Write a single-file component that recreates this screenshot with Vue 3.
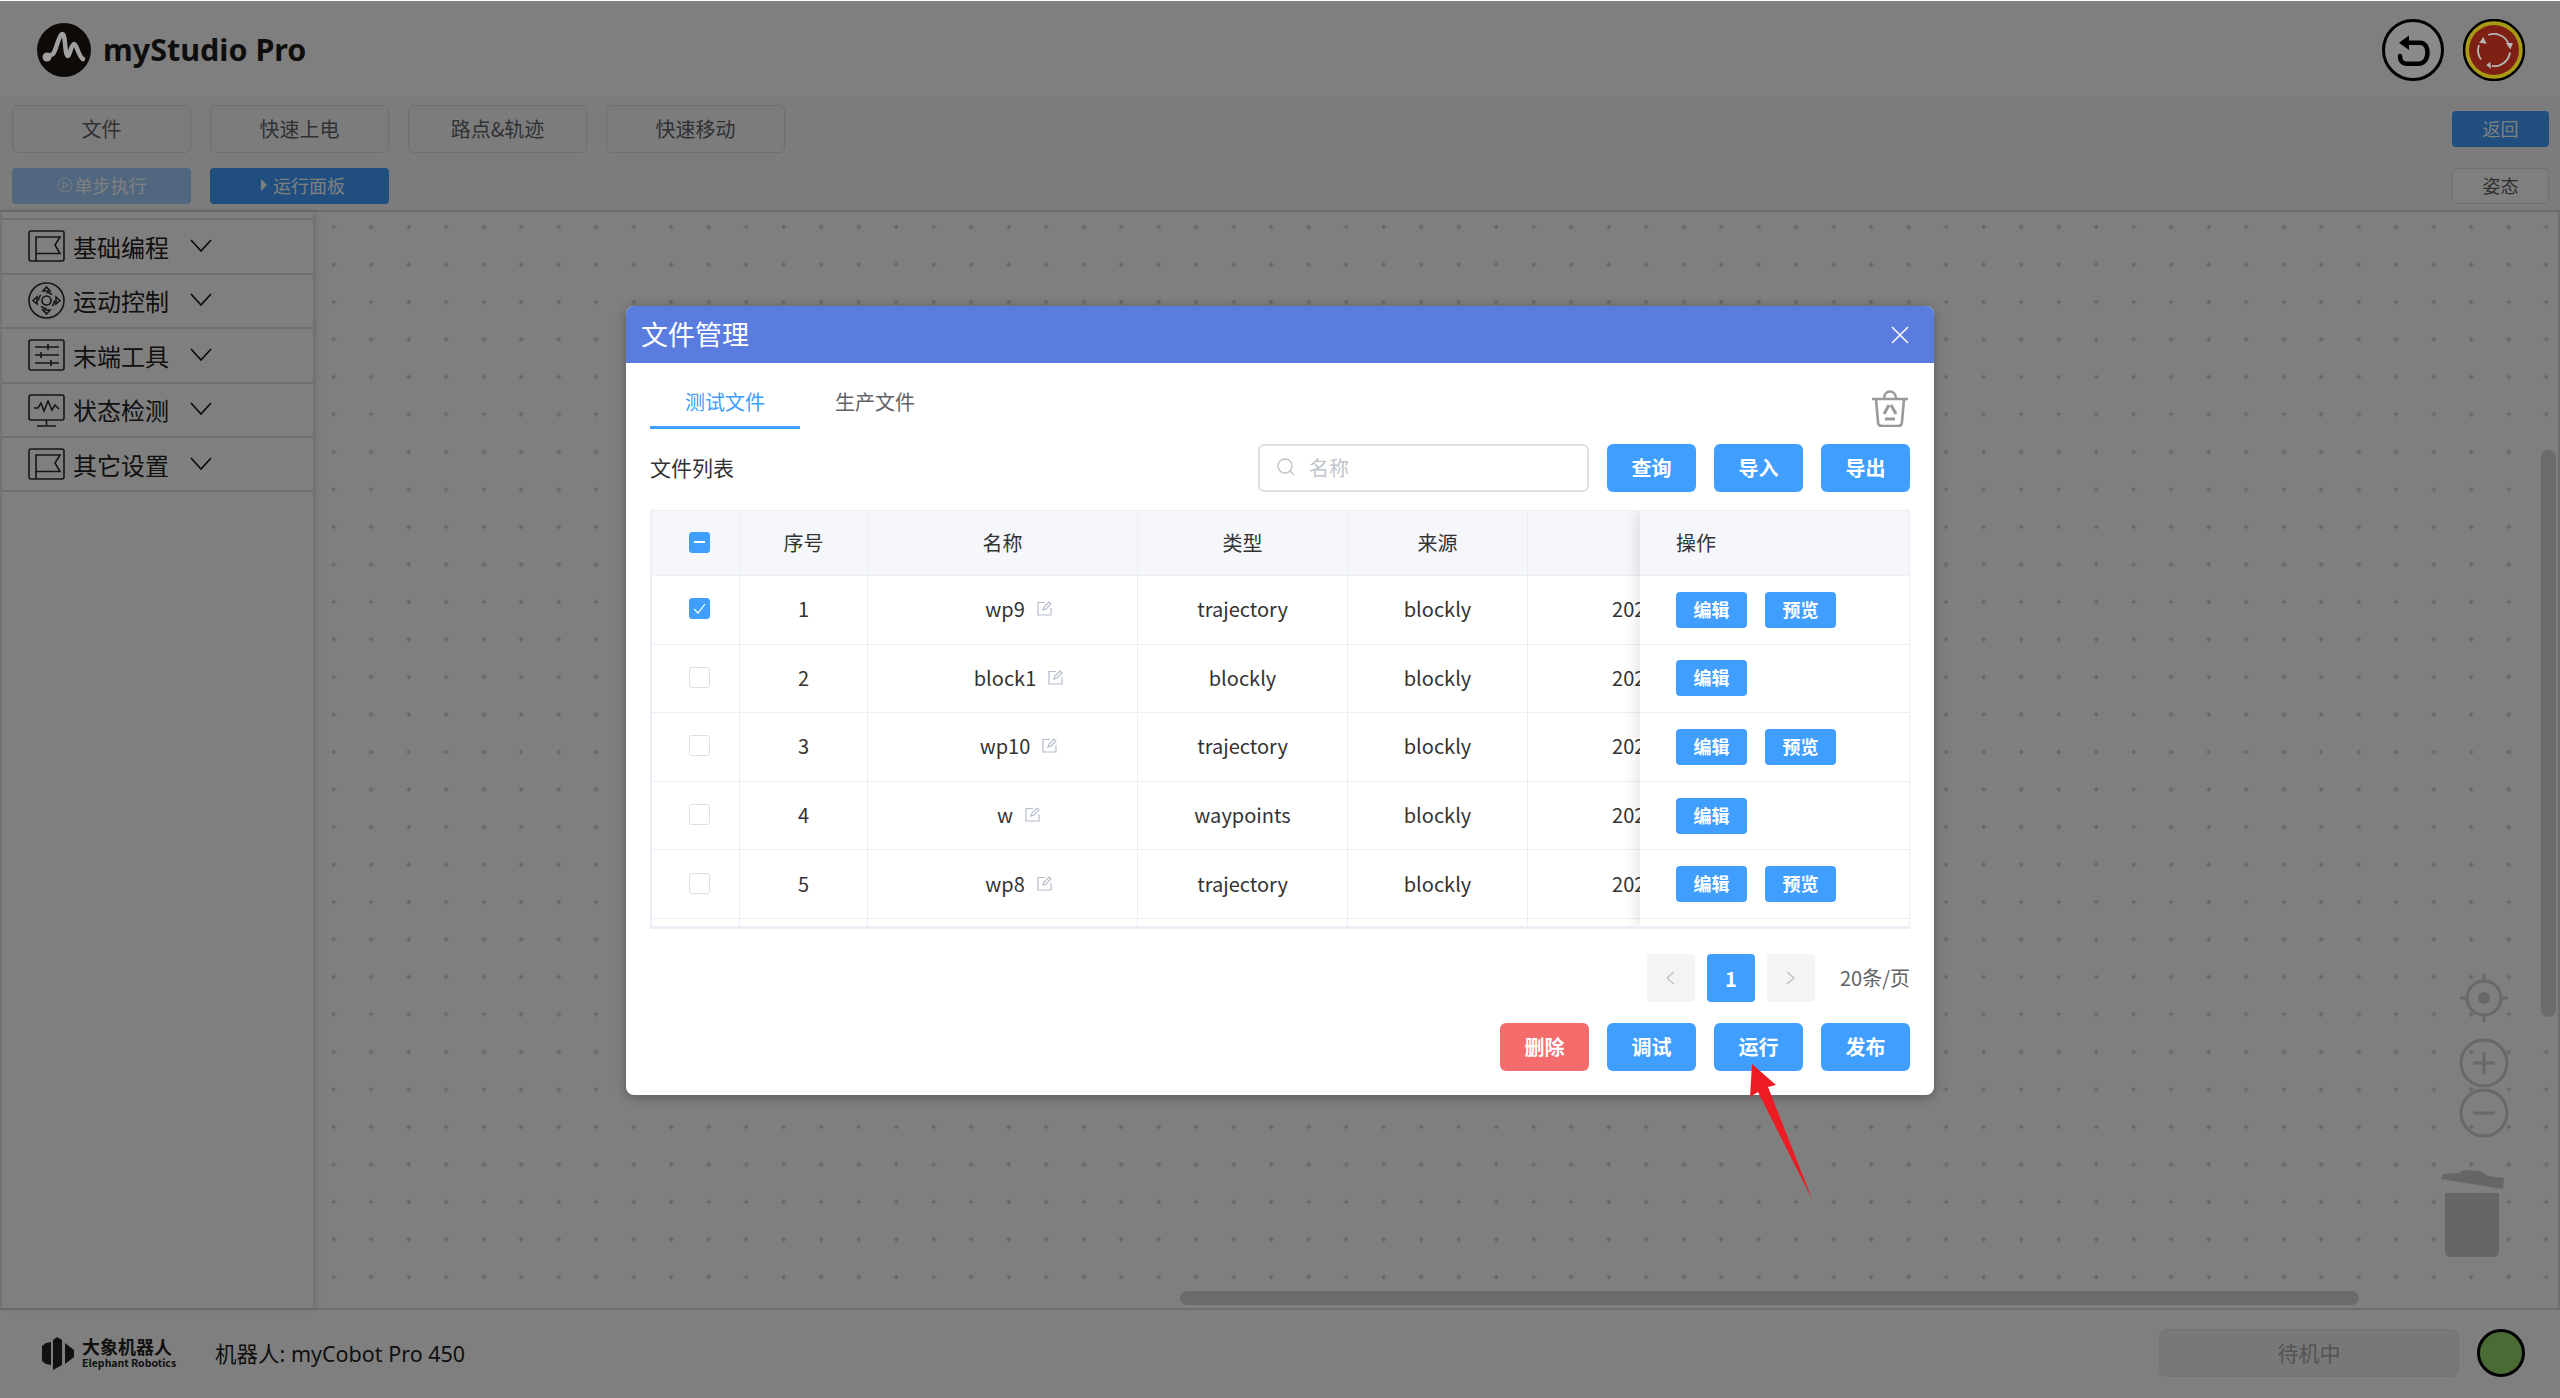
<template>
  <div class="page">
    <header class="topbar">
      <div class="brand">
        <svg class="brand-logo" width="54" height="54" viewBox="0 0 54 54">
          <circle cx="27" cy="27" r="27" fill="#0e0a08" />
          <path d="M10 34 L16 31 C19 27 21 16 24 12 C26.500 9 27.500 14 28 20 C28.500 26 29 33 31 33 C33 33 34 21 37 21 C40 21 41 33 46 36" fill="none" stroke="#a0a0a0" stroke-width="4.500" stroke-linecap="round" stroke-linejoin="round" />
          <circle cx="10" cy="34" r="4.500" fill="#a0a0a0" />
        </svg>
        <span class="brand-name">myStudio Pro</span>
      </div>
      <div class="top-actions">
        <button class="round-btn undo">
          <svg width="62" height="62" viewBox="0 0 62 62">
            <path d="M27 23.7 H38 C43 23.7 45.5 28 45.5 33.5 C45.5 40 42 44.7 36 44.7 H24 C20.5 44.7 18 41.5 18 37" fill="none" stroke="#000" stroke-width="4.5" stroke-linecap="round" />
            <path d="M17 23.7 L27 16.5 V31 Z" fill="#000" />
          </svg>
        </button>
        <button class="round-btn stop">
          <svg width="62" height="62" viewBox="0 0 62 62">
            <circle cx="31" cy="31" r="30" fill="#a89a14" stroke="#000" stroke-width="2.500" />
            <circle cx="31" cy="31" r="25" fill="#7e2114" />
            <path d="M25.300 16 A16 16 0 0 1 45.500 24.500 M47 33.500 A16 16 0 0 1 29 47 M18 40.500 A16 16 0 0 1 16 26" fill="none" stroke="#b5b5b5" stroke-width="1.800" />
            <path d="M43 24 L50 24 L47.300 30.500 Z M23.300 46.300 L27.300 42.700 L28 49.700 Z M20.300 18 L16.300 23.700 L23.700 24.700 Z" fill="#b5b5b5" />
          </svg>
        </button>
      </div>
    </header>

    <section class="toolbar">
      <div class="toolbar-row large">
        <div class="group">
          <button v-for="item in menus" :key="item" class="menu-btn">{{ item }}</button>
        </div>
        <button class="small-btn primary">返回</button>
      </div>
      <div class="toolbar-row">
        <div class="group">
          <button class="small-btn wide disabled">
            <svg width="16" height="16" viewBox="0 0 16 16">
              <circle cx="8" cy="8" r="7" fill="none" stroke="currentColor" />
              <path d="M6 4.5 L11 8 L6 11.500 Z" fill="none" stroke="currentColor" />
            </svg>单步执行
          </button>
          <button class="small-btn wide primary run-btn">
            <svg width="8" height="14" viewBox="0 0 8 14"><path d="M1 1 L7 7 L1 13 Z" fill="currentColor" /></svg>
            运行面板
          </button>
        </div>
        <button class="small-btn plain">姿态</button>
      </div>
    </section>

    <section class="workspace">
      <aside class="sidebar">
        <div v-for="item in sideItems" :key="item.label" class="side-item">
          <svg class="side-icon" width="37" height="37" viewBox="0 0 37 37" fill="none" stroke="#2a2a2a" stroke-width="1.6">
            <template v-if="item.icon === 'flag'">
              <rect x="1" y="3" width="35" height="30" rx="2" />
              <path d="M8 33 V9 H32 L27 17 L32 25.500 H8" />
            </template>
            <template v-else-if="item.icon === 'pad'">
              <circle cx="18.500" cy="18.500" r="17.500" />
              <circle cx="18.500" cy="18.500" r="4.500" />
              <circle cx="18.500" cy="18.500" r="8" stroke-dasharray="6 6.500" />
              <path d="M18.500 5 L22 9 H15 Z M18.500 32 L22 28 H15 Z M5 18.500 L9 15 V22 Z M32 18.500 L28 15 V22 Z" />
            </template>
            <template v-else-if="item.icon === 'sliders'">
              <rect x="1" y="3" width="35" height="30" rx="2" />
              <path d="M7 10 H31 M20 7 V13 M7 18 H31 M13 15 V21 M7 26 H31 M23 23 V29" />
            </template>
            <template v-else>
              <rect x="1" y="4" width="35" height="25" rx="2" />
              <path d="M6 17 L10 17 L13 12 L16 20 L20 10 L24 19 L27 14 L31 18" />
              <path d="M18.500 29 V34 M9 35 H28" />
            </template>
          </svg>
          <span class="side-label">{{ item.label }}</span>
          <svg class="chev" width="22" height="13" viewBox="0 0 22 13"><path d="M1 1 L11 12 L21 1" fill="none" stroke="#111" stroke-width="1.600" /></svg>
        </div>
      </aside>
      <div class="canvas">
        <svg class="dots" width="100%" height="100%">
          <defs>
            <pattern id="grid" width="37.5" height="37.5" patternUnits="userSpaceOnUse">
              <path d="M18.200 15 H23.200 M20.700 12.500 V17.500" stroke="#c6c6c6" stroke-width="1.300" />
            </pattern>
          </defs>
          <rect width="100%" height="100%" fill="url(#grid)" />
        </svg>
        <div class="v-scroll"></div>
        <div class="h-scroll"></div>
        <svg class="controls" width="66" height="273" viewBox="0 0 66 273" fill="none" stroke="#d0d0d0" stroke-width="3">
          <circle cx="43" cy="26" r="17" />
          <circle cx="43" cy="26" r="6" fill="#d0d0d0" stroke="none" />
          <path d="M43 2 V9 M43 43 V50 M19 26 H26 M60 26 H67" />
          <circle cx="43" cy="91" r="23" />
          <path d="M32 91 H54 M43 80 V102" />
          <circle cx="43" cy="141" r="23" />
          <path d="M32 141 H54" />
          <path d="M0 207 L2 202 L18 201 L22 198 L40 199 L47 204 L63 206 L62 217 Z" fill="#cccccc" stroke="none" />
          <path d="M4 221 H58 V279 Q58 285 52 285 H10 Q4 285 4 279 Z" fill="#cccccc" stroke="none" />
        </svg>
      </div>
    </section>

    <footer class="footer">
      <div class="company">
        <svg width="32" height="33" viewBox="0 0 32 33">
          <path d="M0 9 L4 6 L9 5 V28 L4 27 L0 24 Z M11 3 L15 0 L20 3 V28 L11 33 Z M23 6 L32 13 V20 L23 27 Z" fill="#222" />
        </svg>
        <div class="company-text">
          <span class="cn">大象机器人</span>
          <span class="en">Elephant Robotics</span>
        </div>
      </div>
      <span class="robot">机器人: myCobot Pro 450</span>
      <div class="status">待机中</div>
      <span class="light"></span>
    </footer>

    <div class="overlay"></div>

    <div class="dialog">
      <div class="dialog-head">
        <span>文件管理</span>
        <svg width="18" height="18" viewBox="0 0 18 18"><path d="M1 1 L17 17 M17 1 L1 17" stroke="#fff" stroke-width="1.500" /></svg>
      </div>
      <div class="dialog-body">
        <div class="tabs">
          <span class="tab active">测试文件</span>
          <span class="tab">生产文件</span>
          <svg class="recycle" width="38" height="38" viewBox="0 0 38 38" fill="none" stroke="#999" stroke-width="2.600">
            <path d="M1 10 H37 M13 10 C13 0 25 0 25 10" />
            <path d="M5 10 L7 33 Q7 37 11 37 H27 Q31 37 31 33 L33 10" />
            <path d="M18 16 L13 25 M20 16 L25 25 M14 30 H24" stroke-width="3" />
          </svg>
        </div>
        <div class="list-bar">
          <span class="list-title">文件列表</span>
          <div class="search">
            <svg width="18" height="18" viewBox="0 0 18 18" fill="none" stroke="#c0c4cc" stroke-width="1.400"><circle cx="8" cy="8" r="7" /><path d="M13 13 L17 17" /></svg>
            <span>名称</span>
          </div>
          <button class="btn">查询</button>
          <button class="btn">导入</button>
          <button class="btn">导出</button>
        </div>

        <div class="table">
          <div class="table-main">
            <div class="tr th">
              <div class="td"><span class="check on minus"></span></div>
              <div class="td">序号</div>
              <div class="td">名称</div>
              <div class="td">类型</div>
              <div class="td">来源</div>
              <div class="td">创建时间</div>
            </div>
            <div v-for="row in rows" :key="row.no" class="tr">
              <div class="td">
                <span class="check" :class="{ on: row.checked }">
                  <svg v-if="row.checked" width="13" height="11" viewBox="0 0 13 11"><path d="M1 6 L5 10 L12 1" fill="none" stroke="#fff" stroke-width="1.200" /></svg>
                </span>
              </div>
              <div class="td">{{ row.no }}</div>
              <div class="td">
                <span>{{ row.name }}</span>
                <svg class="edit" width="15" height="15" viewBox="0 0 15 15" fill="none" stroke="#b4bccb" stroke-width="1.200">
                  <path d="M8 1.500 H1 V14 H14 V7" />
                  <path d="M6 9 L7 6 L12 1 L14 3 L9 8 Z" />
                </svg>
              </div>
              <div class="td">{{ row.type }}</div>
              <div class="td">blockly</div>
              <div class="td">{{ row.time }}</div>
            </div>
          </div>
          <div class="table-fixed">
            <div class="fixed-cell th">操作</div>
            <div v-for="row in rows" :key="row.no" class="fixed-cell">
              <button v-if="row.no < 6" class="mini">编辑</button>
              <button v-if="row.preview" class="mini">预览</button>
            </div>
          </div>
        </div>

        <div class="pager">
          <span class="page-arrow">
            <svg width="9" height="14" viewBox="0 0 9 14"><path d="M8 1 L1 7 L8 13" fill="none" stroke="#b8bcc4" stroke-width="1.200" /></svg>
          </span>
          <span class="page-no">1</span>
          <span class="page-arrow">
            <svg width="9" height="14" viewBox="0 0 9 14"><path d="M1 1 L8 7 L1 13" fill="none" stroke="#b8bcc4" stroke-width="1.200" /></svg>
          </span>
          <span class="page-size">20条/页</span>
        </div>

        <div class="actions">
          <button class="btn danger">删除</button>
          <button class="btn">调试</button>
          <button class="btn">运行</button>
          <button class="btn">发布</button>
        </div>
      </div>
    </div>

    <svg class="arrow" width="80" height="150" viewBox="0 0 80 150">
      <path d="M12 4 L36 25 L28 27 L72.500 140 L18 32 L10 37 Z" fill="#ed1c24" />
    </svg>
  </div>
</template>

<script setup>
const menus = ['文件', '快速上电', '路点&轨迹', '快速移动']

const sideItems = [
  { label: '基础编程', icon: 'flag' },
  { label: '运动控制', icon: 'pad' },
  { label: '末端工具', icon: 'sliders' },
  { label: '状态检测', icon: 'monitor' },
  { label: '其它设置', icon: 'flag' },
]

const rows = [
  { no: 1, name: 'wp9', type: 'trajectory', time: '2024-11-20 10:21:36', preview: true, checked: true },
  { no: 2, name: 'block1', type: 'blockly', time: '2024-11-20 10:18:02', preview: false },
  { no: 3, name: 'wp10', type: 'trajectory', time: '2024-11-19 17:45:11', preview: true },
  { no: 4, name: 'w', type: 'waypoints', time: '2024-11-19 16:30:47', preview: false },
  { no: 5, name: 'wp8', type: 'trajectory', time: '2024-11-19 15:12:09', preview: true },
  { no: 6, name: '', type: '', time: '', preview: false },
]
</script>

<style scoped>
.page {
  position: relative;
  width: 2560px;
  height: 1398px;
  display: flex;
  flex-direction: column;
  overflow: hidden;
  background: #fff;
  color: #333;
  font-family: "Noto Sans CJK SC", "Noto Sans", sans-serif;
}

button {
  font-family: inherit;
  border: none;
  padding: 0 0 2px;
}

.topbar {
  height: 97px;
  flex: none;
  display: flex;
  align-items: center;
  justify-content: space-between;
  padding: 2px 35px 0 37px;
  box-sizing: border-box;
  background: #fff;
}

.brand {
  display: flex;
  align-items: center;
  gap: 12px;
}

.brand-logo {
  position: relative;
  z-index: 2;
}

.brand-name {
  font-size: 30.500px;
  font-weight: 700;
  color: #1c1c1c;
  font-family: "Noto Sans", sans-serif;
  margin-top: -2px;
}

.top-actions {
  position: relative;
  z-index: 2;
  display: flex;
  gap: 19px;
}

.round-btn {
  width: 62px;
  height: 62px;
  padding: 0;
  background: transparent;
}

.round-btn svg {
  display: block;
}

.undo {
  border: 3px solid #000;
  border-radius: 50%;
  background: #8a8a8a;
  box-sizing: border-box;
}

.undo svg {
  margin: -3px;
}

.toolbar {
  height: 115px;
  flex: none;
  padding: 8px 11px 0 12px;
  box-sizing: border-box;
  background: #f9f9fa;
  border-bottom: 2px solid #d8d8dc;
}

.toolbar-row {
  display: flex;
  justify-content: space-between;
  align-items: center;
}

.toolbar-row.large {
  margin-bottom: 15px;
}

.group {
  display: flex;
  gap: 19px;
}

.menu-btn {
  width: 179px;
  height: 48px;
  background: #f9f9fa;
  border: 1px solid #dcdfe6;
  border-radius: 6px;
  font-size: 20px;
  color: #606266;
  box-sizing: border-box;
}

.small-btn {
  width: 97px;
  height: 36px;
  border-radius: 4px;
  font-size: 18px;
  box-sizing: border-box;
  display: flex;
  align-items: center;
  justify-content: center;
  gap: 2px;
}

.small-btn.wide {
  width: 179px;
}

.small-btn.primary {
  background: #409eff;
  color: #fff;
}

.small-btn.run-btn {
  padding-left: 6px;
  gap: 5px;
}

.small-btn.disabled {
  background: #a0cfff;
  color: #fff;
}

.small-btn.plain {
  background: #fff;
  border: 1px solid #dcdfe6;
  color: #606266;
}

.workspace {
  flex: 1;
  display: flex;
  min-height: 0;
}

.sidebar {
  width: 313px;
  flex: none;
  box-sizing: border-box;
  padding-top: 6px;
  border-left: 2px solid #e6e6e6;
  box-shadow: 3px 0 6px rgba(0, 0, 0, 0.14);
  background: #fff;
  position: relative;
  z-index: 1;
}

.side-item {
  height: 54.500px;
  display: flex;
  align-items: center;
  box-sizing: border-box;
  padding-left: 26px;
  border-top: 2px solid #dcdcdc;
}

.side-item:last-child {
  border-bottom: 2px solid #dcdcdc;
  height: 56px;
}

.side-icon {
  flex: none;
}

.side-label {
  margin-left: 8px;
  font-size: 24px;
  color: #222;
}

.chev {
  margin-left: 21px;
  margin-top: -2px;
}

.canvas {
  flex: 1;
  position: relative;
  background: #fff;
  border-right: 2px solid #dcdcdc;
  overflow: hidden;
}

.dots {
  position: absolute;
  left: 0;
  top: 0;
}

.v-scroll {
  position: absolute;
  left: 2228px;
  top: 238px;
  width: 15px;
  height: 567px;
  border-radius: 8px;
  background: #d6d6d6;
}

.h-scroll {
  position: absolute;
  left: 867px;
  top: 1079px;
  width: 1179px;
  height: 14px;
  border-radius: 7px;
  background: #d6d6d6;
}

.controls {
  position: absolute;
  left: 2128px;
  top: 760px;
  overflow: visible;
}

.footer {
  height: 90px;
  flex: none;
  display: flex;
  align-items: center;
  padding: 0 35px 2px 42px;
  box-sizing: border-box;
  background: #fff;
  border-top: 2px solid #dcdcdc;
}

.company {
  display: flex;
  align-items: center;
  gap: 8px;
}

.company svg {
  flex: none;
}

.company-text {
  display: flex;
  flex-direction: column;
  line-height: 1;
  color: #222;
  font-weight: 700;
}

.cn {
  font-size: 18px;
}

.en {
  margin-top: 3px;
  font-size: 10.500px;
}

.robot {
  margin-left: 39px;
  font-family: "Noto Sans", "Noto Sans CJK SC", sans-serif;
  font-size: 21.500px;
  color: #222;
  padding-bottom: 2px;
}

.status {
  margin-left: auto;
  width: 300px;
  height: 48px;
  line-height: 45px;
  text-align: center;
  font-size: 21px;
  color: #a8a8a8;
  background: #f0f0f0;
  border: 1px solid #e8e8e8;
  border-radius: 8px;
  box-sizing: border-box;
}

.light {
  margin-left: 18px;
  width: 48px;
  height: 48px;
  border: 3px solid #000;
  border-radius: 50%;
  background: #96d668;
  box-sizing: border-box;
}

.overlay {
  position: absolute;
  left: 0;
  right: 0;
  top: 1px;
  bottom: 0;
  background: rgba(0, 0, 0, 0.5);
  z-index: 1;
}

.dialog {
  position: absolute;
  z-index: 2;
  left: 626px;
  top: 306px;
  width: 1308px;
  border-radius: 8px;
  background: #fff;
  overflow: hidden;
  box-shadow: 0 2px 12px rgba(0, 0, 0, 0.3);
}

.dialog-head {
  height: 57px;
  display: flex;
  align-items: center;
  justify-content: space-between;
  padding: 0 25px 0 15px;
  background: #5b7cdf;
  color: #fff;
  font-size: 27px;
}

.dialog-head span {
  padding-bottom: 2px;
}

.dialog-body {
  padding: 14px 24px 24px;
}

.tabs {
  display: flex;
  align-items: flex-start;
  height: 52px;
}

.tab {
  width: 150px;
  height: 52px;
  line-height: 50px;
  text-align: center;
  font-size: 20px;
  color: #606266;
  box-sizing: border-box;
}

.tab.active {
  color: #409eff;
  border-bottom: 3px solid #409eff;
}

.recycle {
  margin-left: auto;
  margin-top: 12px;
  margin-right: 1px;
}

.list-bar {
  display: flex;
  align-items: center;
  gap: 18px;
  margin-top: 15px;
}

.list-title {
  margin-right: auto;
  font-size: 21px;
  color: #333;
  padding-bottom: 2px;
}

.search {
  width: 331px;
  height: 48px;
  box-sizing: border-box;
  display: flex;
  align-items: center;
  gap: 14px;
  padding: 0 0 2px 17px;
  border: 2px solid #dcdfe6;
  border-radius: 6px;
  font-size: 20px;
  color: #c0c4cc;
}

.btn {
  width: 89px;
  height: 48px;
  border-radius: 6px;
  background: #409eff;
  color: #fff;
  font-size: 20px;
  font-weight: 700;
}

.btn.danger {
  background: #f56c6c;
}

.table {
  display: flex;
  height: 419px;
  margin-top: 18px;
  box-sizing: border-box;
  border: 1px solid #ebeef5;
  border-left-width: 2px;
  border-bottom-width: 3px;
  overflow: hidden;
}

.table-main {
  width: 988px;
  flex: none;
  overflow: hidden;
  font-size: 20px;
  color: #333;
}

.tr {
  display: grid;
  grid-template-columns: 88px 128px 270px 210px 180px 354px;
  width: 1230px;
  height: 68.600px;
}

.tr.th {
  height: 65px;
  background: #f5f7fa;
}

.td {
  display: flex;
  align-items: center;
  justify-content: center;
  white-space: nowrap;
  padding-bottom: 2px;
  border-right: 1px solid #ebeef5;
  border-bottom: 1px solid #ebeef5;
  box-sizing: border-box;
}

.check {
  width: 21px;
  height: 21px;
  margin-left: 7px;
  box-sizing: border-box;
  border: 1px solid #dcdfe6;
  border-radius: 3px;
  background: #fff;
  display: flex;
  align-items: center;
  justify-content: center;
}

.check.on {
  background: #409eff;
  border-color: #409eff;
}

.check.minus::before {
  content: "";
  width: 11px;
  height: 2px;
  background: #fff;
}

.edit {
  margin-left: 12px;
  margin-right: -32px;
}

.table-fixed {
  flex: 1;
  position: relative;
  background: #fff;
  box-shadow: -6px 0 10px rgba(0, 0, 0, 0.08);
  font-size: 20px;
  color: #333;
}

.fixed-cell {
  height: 68.600px;
  display: flex;
  align-items: center;
  gap: 18px;
  padding-left: 36px;
  box-sizing: border-box;
  border-bottom: 1px solid #ebeef5;
}

.fixed-cell.th {
  height: 65px;
  padding-bottom: 2px;
  background: #f5f7fa;
}

.mini {
  width: 71px;
  height: 36px;
  border-radius: 4px;
  background: #409eff;
  color: #fff;
  font-size: 18px;
  font-weight: 700;
}

.pager {
  display: flex;
  align-items: center;
  justify-content: flex-end;
  gap: 12px;
  margin-top: 25px;
  height: 48px;
}

.page-arrow,
.page-no {
  width: 48px;
  height: 48px;
  border-radius: 4px;
  display: flex;
  align-items: center;
  justify-content: center;
  background: #f4f4f5;
}

.page-no {
  background: #409eff;
  color: #fff;
  font-size: 20px;
  font-weight: 700;
}

.page-size {
  margin-left: 13px;
  font-size: 20px;
  color: #606266;
  padding-bottom: 2px;
}

.actions {
  display: flex;
  justify-content: flex-end;
  gap: 18px;
  margin-top: 21px;
}

.arrow {
  position: absolute;
  z-index: 3;
  left: 1740px;
  top: 1060px;
}
</style>

<style>
html,
body {
  margin: 0;
  background: #fff;
}
</style>
